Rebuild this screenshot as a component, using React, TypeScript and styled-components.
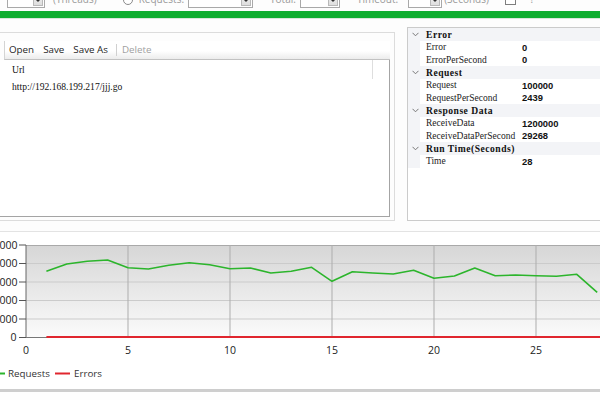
import React from 'react'
import styled, { createGlobalStyle } from 'styled-components'

const GlobalStyle = createGlobalStyle`
  html, body {
    margin: 0;
    padding: 0;
    background: #fafafa;
  }
  body {
    font-family: 'Open Sans', 'Liberation Sans', sans-serif;
  }
`

const groups = [
  { title: 'Error', rows: [['Error', '0'], ['ErrorPerSecond', '0']] },
  { title: 'Request', rows: [['Request', '100000'], ['RequestPerSecond', '2439']] },
  { title: 'Response Data', rows: [['ReceiveData', '1200000'], ['ReceiveDataPerSecond', '29268']] },
  { title: 'Run Time(Seconds)', rows: [['Time', '28']] }
]

// requests per second, one value per second of the run
const requests = [
  3578, 3973, 4119, 4189, 3773, 3703, 3903, 4043, 3935, 3719, 3757, 3486, 3578, 3795, 3038, 3557,
  3486, 3432, 3632, 3200, 3324, 3757, 3341, 3378, 3341, 3308, 3416, 2443
]

const App = () => {
  return (
    <>
      <GlobalStyle />
      <Page>
        <ControlStrip>
          <Combo $ml={7} $w={38}>
            <ComboArrow />
          </Combo>
          <Hint $ml={8}>(Threads)</Hint>
          <Radio $ml={26} />
          <Hint $ml={6}>Requests:</Hint>
          <Combo $ml={4} $w={65}>
            <ComboArrow />
          </Combo>
          <Hint $ml={17}>Total:</Hint>
          <Combo $ml={4} $w={40}>
            <ComboArrow />
          </Combo>
          <Hint $ml={17}>Timeout:</Hint>
          <Combo $ml={10} $w={34}>
            <ComboArrow />
          </Combo>
          <Hint $ml={2}>(Seconds)</Hint>
          <Check $ml={16} />
          <Hint $ml={14}>?</Hint>
        </ControlStrip>

        <ProgressBar />

        <Middle>
          <EditorPanel>
            <Toolbar>
              <ToolButton>Open</ToolButton>
              <ToolButton>Save</ToolButton>
              <ToolButton>Save As</ToolButton>
              <ToolSeparator />
              <ToolButton $disabled>Delete</ToolButton>
            </Toolbar>
            <UrlGrid>
              <GridHeader>
                <HeaderCell>Url</HeaderCell>
              </GridHeader>
              <GridRow>http://192.168.199.217/jjj.go</GridRow>
            </UrlGrid>
          </EditorPanel>

          <PropertyGrid>
            {groups.map((g) => (
              <React.Fragment key={g.title}>
                <CategoryRow>
                  <Gutter>
                    <svg width='7' height='5' viewBox='0 0 7 5'>
                      <path d='M0.5 0.8 L3.5 3.8 L6.5 0.8' fill='none' stroke='#777' strokeWidth='1' />
                    </svg>
                  </Gutter>
                  <CategoryTitle>{g.title}</CategoryTitle>
                </CategoryRow>
                {g.rows.map(([name, value]) => (
                  <PropRow key={name}>
                    <Gutter />
                    <PropName>{name}</PropName>
                    <PropValue>{value}</PropValue>
                  </PropRow>
                ))}
              </React.Fragment>
            ))}
          </PropertyGrid>
        </Middle>

        <ChartPanel>
          <Chart data={requests} />
        </ChartPanel>
      </Page>
    </>
  )
}

export default App

const X0 = 26
const XSTEP = 20.4
const YTOP = 13
const YZERO = 105.5
const YMAX = 5000

const px = (u: number) => X0 + u * XSTEP
const py = (v: number) => YZERO - (v / YMAX) * (YZERO - YTOP)

const Chart = ({ data }: { data: number[] }) => {
  const ticks = [0, 1000, 2000, 3000, 4000, 5000]
  const xTicks = [0, 5, 10, 15, 20, 25]
  const green = data.map((v, i) => `${px(i + 1)},${py(v)}`).join(' ')

  return (
    <svg width='600' height='157' viewBox='0 0 600 157'>
      <defs>
        <linearGradient id='plotBg' x1='0' y1='0' x2='0' y2='1'>
          <stop offset='0' stopColor='#d6d6d6' />
          <stop offset='1' stopColor='#fbfbfb' />
        </linearGradient>
      </defs>
      <rect x={X0} y={YTOP} width={600 - X0} height={YZERO - YTOP} fill='url(#plotBg)' />
      {ticks.slice(1, 5).map((t) => (
        <line key={t} x1={X0} x2={600} y1={py(t)} y2={py(t)} stroke='#cbcbcb' strokeWidth='1' />
      ))}
      <line x1={X0} x2={600} y1={YTOP + 0.5} y2={YTOP + 0.5} stroke='#a9a9a9' strokeWidth='1' />
      {xTicks.slice(1).map((t) => (
        <line key={t} x1={px(t)} x2={px(t)} y1={YTOP} y2={YZERO} stroke='#adadad' strokeWidth='1' />
      ))}
      <line x1={X0} x2={X0} y1={YTOP} y2={YZERO} stroke='#666' strokeWidth='1' />
      <line x1={X0} x2={600} y1={YZERO} y2={YZERO} stroke='#777' strokeWidth='1' />
      {ticks.map((t) => (
        <g key={t}>
          <line x1={19} x2={X0} y1={py(t)} y2={py(t)} stroke='#555' strokeWidth='1' />
          <text
            x={t === 0 ? 16.5 : 17.5}
            y={py(t) + 3.8}
            textAnchor='end'
            fontFamily='Open Sans, Liberation Sans, sans-serif'
            fontSize='10.5'
            fill='#222'
          >
            {t}
          </text>
        </g>
      ))}
      {xTicks.map((t) => (
        <text
          key={t}
          x={px(t)}
          y={121.5}
          textAnchor='middle'
          fontFamily='Open Sans, Liberation Sans, sans-serif'
          fontSize='10.5'
          fill='#222'
        >
          {t}
        </text>
      ))}
      <line x1={px(1)} x2={600} y1={YZERO - 0.5} y2={YZERO - 0.5} stroke='#e0262e' strokeWidth='2' />
      <polyline points={green} fill='none' stroke='#2cb52c' strokeWidth='1.6' strokeLinejoin='round' />

      <line x1={-10} x2={5} y1={141.5} y2={141.5} stroke='#2cb52c' strokeWidth='2' />
      <text x={8} y={145} fontFamily='Open Sans, Liberation Sans, sans-serif' fontSize='9.8' fill='#333'>
        Requests
      </text>
      <line x1={55} x2={70} y1={141.5} y2={141.5} stroke='#e0262e' strokeWidth='2' />
      <text x={74} y={145} fontFamily='Open Sans, Liberation Sans, sans-serif' fontSize='9.8' fill='#333'>
        Errors
      </text>
    </svg>
  )
}

const Page = styled.div`
  width: 600px;
  height: 400px;
  overflow: hidden;
  background: #fdfdfd;
  display: flex;
  flex-direction: column;
`

const ControlStrip = styled.div`
  height: 20px;
  margin-top: -12px;
  display: flex;
  align-items: center;
  flex-shrink: 0;
`

const Combo = styled.div<{ $ml: number; $w: number }>`
  margin-left: ${(p) => p.$ml}px;
  width: ${(p) => p.$w}px;
  height: 19px;
  box-sizing: border-box;
  border: 1px solid #a9a9a9;
  background: #fff;
  display: flex;
  justify-content: flex-end;
  align-items: stretch;
  padding: 1px;
  flex-shrink: 0;
`

const ComboArrow = styled.div`
  width: 8px;
  border: 1px solid #b9b9b9;
  background: linear-gradient(#f4f4f4, #dedede);
  position: relative;
  &::after {
    content: '';
    position: absolute;
    left: 1px;
    bottom: 3px;
    border-left: 3px solid transparent;
    border-right: 3px solid transparent;
    border-top: 3px solid #333;
  }
`

const Hint = styled.span<{ $ml: number }>`
  margin-left: ${(p) => p.$ml}px;
  font-size: 10px;
  color: #9a9a9a;
  white-space: nowrap;
  line-height: 10px;
  margin-top: 2px;
`

const Radio = styled.span<{ $ml: number }>`
  margin-left: ${(p) => p.$ml}px;
  width: 8px;
  height: 8px;
  border: 1px solid #8a8a8a;
  border-radius: 50%;
  background: #fff;
  margin-top: 4px;
  flex-shrink: 0;
`

const Check = styled.span<{ $ml: number }>`
  margin-left: ${(p) => p.$ml}px;
  width: 9px;
  height: 9px;
  border: 1px solid #7e7e7e;
  background: #fff;
  flex-shrink: 0;
  margin-top: 2px;
`

const ProgressBar = styled.div`
  margin-top: 3px;
  height: 7px;
  background: #0fae2f;
  border-bottom: 1px solid #d9e7da;
  flex-shrink: 0;
`

const Middle = styled.div`
  margin-top: 8px;
  height: 194px;
  display: flex;
  align-items: flex-start;
  flex-shrink: 0;
`

const EditorPanel = styled.div`
  margin-left: -6px;
  margin-top: 5px;
  width: 401px;
  height: 189px;
  box-sizing: border-box;
  border: 1px solid #dcdcdc;
  background: #fdfdfd;
  display: flex;
  flex-direction: column;
  padding: 8px 4px 3px 0;
  flex-shrink: 0;
`

const Toolbar = styled.div`
  margin-left: 9px;
  height: 19px;
  box-sizing: border-box;
  border-left: 1px solid #d4d4d4;
  border-bottom: 1px solid #c2c2c2;
  background: linear-gradient(#ffffff, #ffffff 55%, #ececec);
  display: flex;
  align-items: center;
  padding-left: 4px;
  gap: 9px;
`

const ToolButton = styled.span<{ $disabled?: boolean }>`
  font-size: 9.8px;
  color: ${(p) => (p.$disabled ? '#a0a0a0' : '#1e1e1e')};
  white-space: nowrap;
  line-height: 12px;
`

const ToolSeparator = styled.span`
  width: 1px;
  height: 12px;
  background: #d0d0d0;
  margin-left: -1px;
  margin-right: -4px;
`

const UrlGrid = styled.div`
  flex: 1;
  border: 1px solid #a4a4a4;
  border-top: none;
  background: #fff;
  display: flex;
  flex-direction: column;
`

const GridHeader = styled.div`
  height: 19px;
  display: flex;
`

const HeaderCell = styled.div`
  width: 377px;
  box-sizing: border-box;
  border-right: 1px solid #dedede;
  padding: 4px 0 0 16px;
  font-family: 'Liberation Serif', serif;
  font-size: 9.6px;
  color: #111;
`

const GridRow = styled.div`
  padding: 2px 0 0 16px;
  height: 14px;
  font-family: 'Liberation Serif', serif;
  font-size: 9.6px;
  color: #111;
`

const PropertyGrid = styled.div`
  margin-left: 12px;
  width: 200px;
  height: 194px;
  box-sizing: border-box;
  border: 1px solid #cbcbcb;
  background: #fff;
  flex-shrink: 0;
`

const CategoryRow = styled.div`
  height: 12.7px;
  display: grid;
  grid-template-columns: 12px 1fr;
  align-items: center;
  background: #f3f4f7;
`

const PropRow = styled.div`
  height: 12.7px;
  display: grid;
  grid-template-columns: 12px 100px 1fr;
  align-items: center;
`

const Gutter = styled.div`
  height: 100%;
  background: #f3f4f7;
  display: flex;
  align-items: center;
  justify-content: center;
  padding-left: 2px;
`

const CategoryTitle = styled.span`
  padding-left: 6px;
  font-family: 'Liberation Serif', serif;
  font-weight: 700;
  font-size: 9.6px;
  letter-spacing: 0.5px;
  color: #111;
  white-space: nowrap;
`

const PropName = styled.span`
  padding-left: 6px;
  font-family: 'Liberation Serif', serif;
  font-size: 9.5px;
  color: #222;
  white-space: nowrap;
`

const PropValue = styled.span`
  padding-left: 2px;
  font-family: 'Liberation Sans', sans-serif;
  font-weight: 700;
  font-size: 9.4px;
  color: #111;
`

const ChartPanel = styled.div`
  margin-top: 10px;
  margin-left: 0;
  height: 157px;
  border-top: 1px solid #e3e3e3;
  border-bottom: 3px solid #cdcdcd;
  background: #fff;
  flex-shrink: 0;
  display: flex;
`
